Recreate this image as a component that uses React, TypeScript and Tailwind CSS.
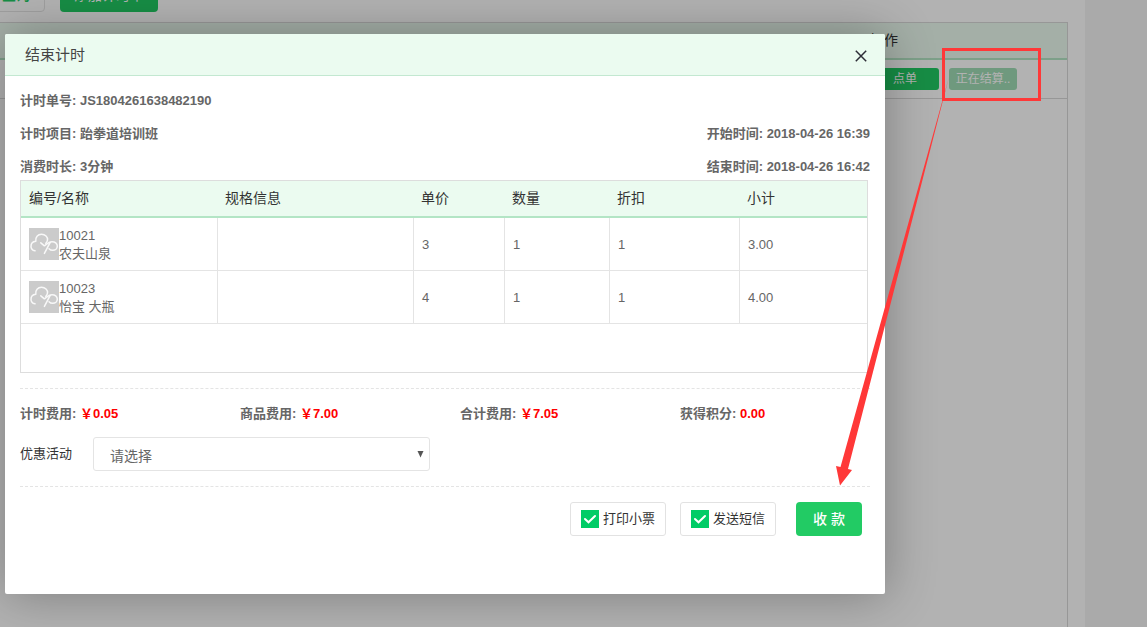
import { useState } from 'react'

interface Item {
  code: string
  name: string
  price: string
  qty: string
  discount: string
  subtotal: string
}

const ITEMS: Item[] = [
  { code: '10021', name: '农夫山泉', price: '3', qty: '1', discount: '1', subtotal: '3.00' },
  { code: '10023', name: '怡宝 大瓶', price: '4', qty: '1', discount: '1', subtotal: '4.00' },
]

const FEES = [
  { label: '计时费用:', value: '￥0.05' },
  { label: '商品费用:', value: '￥7.00' },
  { label: '合计费用:', value: '￥7.05' },
  { label: '获得积分:', value: '0.00' },
]

function Thumb() {
  return (
    <svg width="30" height="32" viewBox="0 0 30 32" className="shrink-0" aria-hidden="true">
      <rect width="30" height="32" fill="#cbcbcb" />
      <g fill="none" stroke="#f8f8f8" strokeWidth="1.5" strokeLinecap="round" strokeLinejoin="round">
        <path d="M6 22.8C3.400 22.300 2 20.400 2 18.200C2 15.500 4 13.600 6.800 13.300C6.200 9.300 8.800 6.300 12.500 6.300C16.200 6.300 18.900 9 18.500 12C18.300 13.600 17.600 14.600 16.800 15.400" />
        <path d="M11.800 14.800L15.400 17.800C17.400 16.600 19 13.900 22.800 13.700C26 13.600 28.300 15.500 28.300 18C28.300 20.600 26.200 22.300 23.800 22.300C22.200 22.300 20.900 21.700 20 20.700" />
        <path d="M21.200 14.400L15.400 25.400" />
      </g>
    </svg>
  )
}

function Check({ label }: { label: string }) {
  const [checked, setChecked] = useState(true)
  return (
    <label className="flex h-[34px] items-center gap-1 rounded-[3px] border border-[#e2e2e2] px-2.5 text-[13px] text-[#333]">
      <span className="relative flex h-[18px] w-[18px]">
        <input
          type="checkbox"
          checked={checked}
          onChange={e => setChecked(e.target.checked)}
          className="h-[18px] w-[18px] appearance-none border border-[#00cc66] checked:bg-[#00cc66]"
        />
        {checked && (
          <svg viewBox="0 0 18 18" className="pointer-events-none absolute inset-0" aria-hidden="true">
            <path d="M4 9L7.500 12.300L14 6" fill="none" stroke="#fff" strokeWidth="2" strokeLinecap="round" />
          </svg>
        )}
      </span>
      {label}
    </label>
  )
}

function ItemTable() {
  return (
    <div className="mt-[3px] mr-0.5 border border-[#ddd] pb-12">
      <table className="w-full table-fixed border-separate border-spacing-0 text-left">
        <colgroup>
          <col className="w-[197px]" />
          <col className="w-[196px]" />
          <col className="w-[91px]" />
          <col className="w-[105px]" />
          <col className="w-[130px]" />
          <col />
        </colgroup>
        <thead>
          <tr className="h-[37px] bg-[#ebfbf0] text-sm text-[#333]">
            {['编号/名称', '规格信息', '单价', '数量', '折扣', '小计'].map(title => (
              <th key={title} className="border-b-2 border-[#b3e5c5] px-[7px] pt-0 pb-0.5 font-normal first:pl-2">{title}</th>
            ))}
          </tr>
        </thead>
        <tbody className="text-[13px] text-[#666] [&_td]:border-b [&_td]:border-[#e4e4e4] [&_td]:px-2 [&_td+td]:pt-0.5 [&_td:not(:last-child)]:border-r">
          {ITEMS.map(item => (
            <tr key={item.code} className="h-[53px]">
              <td>
                <div className="flex items-center">
                  <Thumb />
                  <div className="pt-0.5 leading-[18px]">
                    <div>{item.code}</div>
                    <div>{item.name}</div>
                  </div>
                </div>
              </td>
              <td />
              <td>{item.price}</td>
              <td>{item.qty}</td>
              <td>{item.discount}</td>
              <td>{item.subtotal}</td>
            </tr>
          ))}
        </tbody>
      </table>
    </div>
  )
}

function CheckoutDialog() {
  return (
    <div
      role="dialog"
      aria-labelledby="dialog-title"
      className="absolute top-[34px] left-[5px] w-[880px] rounded-xs bg-white shadow-[1px_1px_50px_rgba(0,0,0,0.3)]"
    >
      <div className="flex h-[42px] items-center justify-between rounded-t-xs border-b border-[#c3e8d1] bg-[#ebfbf0] pt-0.5 pr-4 pl-5">
        <h2 id="dialog-title" className="text-[15px] text-[#444]">结束计时</h2>
        <button type="button" aria-label="关闭" className="flex h-4 w-4 items-center justify-center">
          <svg width="12" height="12" viewBox="0 0 12 12" aria-hidden="true">
            <path d="M0.800 0.800L11.200 11.200M11.200 0.800L0.800 11.200" stroke="#2d2d37" strokeWidth="1.5" />
          </svg>
        </button>
      </div>

      <div className="px-[15px] pt-3.5 pb-[58px]">
        <div className="flex flex-col gap-3 text-[13px] leading-[21px] font-bold text-[#666]">
          <div>计时单号: JS1804261638482190</div>
          <div className="flex justify-between">
            <span>计时项目: 跆拳道培训班</span>
            <span>开始时间: 2018-04-26 16:39</span>
          </div>
          <div className="flex justify-between">
            <span>消费时长: 3分钟</span>
            <span>结束时间: 2018-04-26 16:42</span>
          </div>
        </div>

        <ItemTable />

        <div className="mt-[15px] flex h-12 items-center border-t border-dashed border-[#e4e4e4] pt-0.5 text-[13px] font-bold text-[#666]">
          {FEES.map(fee => (
            <div key={fee.label} className="w-[220px] last:w-auto">
              {fee.label} <span className="text-[#f00]">{fee.value}</span>
            </div>
          ))}
        </div>

        <div className="mt-px flex items-center gap-[21px] pb-[15px] text-[13px]">
          <label htmlFor="promotion" className="text-[#333]">优惠活动</label>
          <div className="relative w-[337px]">
            <select
              id="promotion"
              className="block h-[34px] w-full appearance-none rounded-[3px] border border-[#e4e4e4] bg-white pt-1 pr-6 pl-4 text-sm text-[#666]"
            >
              <option>请选择</option>
            </select>
            <svg width="7" height="7" viewBox="0 0 7 7" className="pointer-events-none absolute top-3.5 right-1.5" aria-hidden="true">
              <path d="M0.500 0H6.500L3.500 6.500Z" fill="#555" />
            </svg>
          </div>
        </div>

        <div className="flex items-center justify-end border-t border-dashed border-[#e4e4e4] pt-[15px] pr-2">
          <div className="flex gap-3.5">
            <Check label="打印小票" />
            <Check label="发送短信" />
          </div>
          <button type="button" className="ml-5 h-[34px] w-[66px] rounded bg-[#22cb64] text-sm font-medium text-white">
            收 款
          </button>
        </div>
      </div>
    </div>
  )
}

function TimerPage() {
  return (
    <main className="mr-[62px] flex min-h-screen flex-col bg-white pr-[17px]">
      <div className="flex h-3 items-end gap-[15px] overflow-hidden">
        <button type="button" className="-ml-[13px] h-[34px] shrink-0 rounded border border-[#e4e4e4] px-3.5 text-sm font-bold text-[#22cb64]">
          查询
        </button>
        <button type="button" className="h-[34px] w-[98px] shrink-0 rounded bg-[#22cb64] text-sm text-white">
          添加计时单
        </button>
      </div>
      <div className="mt-2.5 flex-1 border-t border-r border-[#d8d8d8]">
        <table className="w-full table-fixed border-separate border-spacing-0 text-left">
          <thead>
            <tr className="h-[37px] bg-[#ebfbf0] text-sm text-[#333]">
              <th className="border-b-2 border-[#b3e5c5] p-0" />
              <th className="w-[205px] border-b-2 border-[#b3e5c5] px-2 pt-0 pb-0.5 font-normal">操作</th>
            </tr>
          </thead>
          <tbody>
            <tr className="h-[39px]">
              <td className="border-b border-[#d8d8d8] p-0" />
              <td className="border-b border-[#d8d8d8] px-[9px] py-0">
                <div className="flex gap-2.5 text-xs text-white">
                  <button type="button" className="h-[22px] w-[68px] rounded-[3px] bg-[#22cb64]">点单</button>
                  <button type="button" disabled className="h-[22px] w-[68px] rounded-[3px] bg-[#9fdbb5]">正在结算..</button>
                </div>
              </td>
            </tr>
          </tbody>
        </table>
      </div>
    </main>
  )
}

export default function App() {
  return (
    <div className="relative min-h-screen overflow-hidden bg-[#f4f4f4] font-['Liberation_Sans','Noto_Sans_CJK_SC',sans-serif]">
      <TimerPage />
      <div className="absolute inset-0 bg-black/30" />
      <CheckoutDialog />

      {/* Callout from the row button to the pay button */}
      <svg width="1147" height="627" viewBox="0 0 1147 627" className="pointer-events-none absolute top-0 left-0" aria-hidden="true">
        <rect x="943.5" y="49.5" width="96" height="50" fill="none" stroke="#ff3838" strokeWidth="3" />
        <path d="M949 77L848 469L852 470L840 485.500L836 466L840.500 467Z" fill="#ff3838" />
      </svg>
    </div>
  )
}
